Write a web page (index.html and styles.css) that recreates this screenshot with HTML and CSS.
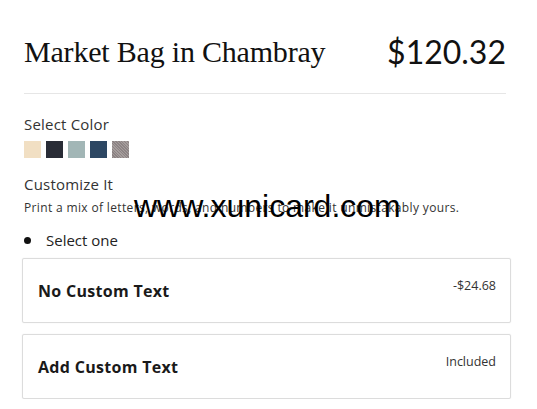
FILE: index.html
```html
<!DOCTYPE html>
<html lang="en">
<head>
  <meta charset="UTF-8" />
  <title>Market Bag in Chambray</title>
  <link rel="stylesheet" href="styles.css">
</head>
<body>
  <div class="product">
    <div class="product-head">
      <h1>Market Bag in Chambray</h1>
      <div class="price">$120.32</div>
    </div>

    <div class="field">
      <div class="label">Select Color</div>
      <div class="swatches">
        <span class="swatch natural"></span>
        <span class="swatch black"></span>
        <span class="swatch sage"></span>
        <span class="swatch navy"></span>
        <span class="swatch tweed"></span>
      </div>
    </div>

    <div class="field custom">
      <div class="label">Customize It</div>
      <p class="hint">Print a mix of letters, words, and numbers to make it unmistakably yours.</p>
    </div>

    <div class="select-one"><span class="dot"></span>Select one</div>

    <div class="options">
      <div class="option">
        <span class="option-name">No Custom Text</span>
        <span class="option-price">-$24.68</span>
      </div>
      <div class="option">
        <span class="option-name">Add Custom Text</span>
        <span class="option-price">Included</span>
      </div>
    </div>
  </div>

  <div class="watermark">www.xunicard.com</div>
</body>
</html>
```

FILE: styles.css
```css
* {
  box-sizing: border-box;
  margin: 0;
  padding: 0;
}

body {
  background: #fff;
  color: #222;
  font-family: "Open Sans", "Noto Sans", sans-serif;
  position: relative;
}

.product {
  padding: 0 26px 0 22px;
}

.product-head {
  display: flex;
  justify-content: space-between;
  align-items: center;
  margin: 0 5px 0 2px;
  padding: 32px 0 21px;
  border-bottom: 1px solid #e6e6e6;
}

.product-head h1 {
  font-family: "Liberation Serif", serif;
  font-weight: normal;
  font-size: 30px;
  line-height: 40px;
  color: #111;
  letter-spacing: -0.2px;
}

.price {
  font-family: Lato, sans-serif;
  font-size: 32px;
  line-height: 40px;
  color: #111;
}

.field {
  margin: 0 2px;
}

.label {
  font-size: 15px;
  line-height: 20px;
  color: #333;
  letter-spacing: 0.2px;
}

.product-head + .field {
  padding-top: 20px;
}

.swatches {
  display: flex;
  gap: 5px;
  margin-top: 7px;
}

.swatch {
  width: 17px;
  height: 17px;
}

.natural { background: #f1dfc3; }
.black { background: #292c36; }
.sage { background: #a2b6b6; }
.navy { background: #2d4763; }
.tweed {
  background: repeating-linear-gradient(45deg, #8c8384 0 1px, #a59d9c 1px 2px);
}

.custom {
  margin-top: 16px;
}

.hint {
  font-size: 12px;
  line-height: 16px;
  color: #333;
  margin-top: 6px;
  letter-spacing: 0.35px;
}

.select-one {
  display: flex;
  align-items: center;
  font-size: 15px;
  line-height: 18px;
  color: #222;
  margin: 15px 0 0 2px;
}

.dot {
  width: 7px;
  height: 7px;
  border-radius: 50%;
  background: #111;
  margin: 0 15px 0 0;
}

.options {
  display: flex;
  flex-direction: column;
  gap: 11px;
  margin-top: 9px;
}

.option {
  display: flex;
  justify-content: space-between;
  align-items: flex-start;
  height: 65px;
  padding: 0 14px 0 15px;
  border: 1px solid #dcdcdc;
  border-radius: 2px;
  box-shadow: 0 0 1px rgba(0, 0, 0, 0.15);
}

.option-name {
  font-size: 16px;
  font-weight: bold;
  color: #1a1a1a;
  margin-top: 21px;
  letter-spacing: 0.3px;
}

.option-price {
  font-size: 12.5px;
  color: #333;
  margin-top: 18px;
}

.watermark {
  position: absolute;
  left: 134px;
  top: 188px;
  font-family: "Liberation Sans", Arial, sans-serif;
  font-size: 32px;
  color: #000;
}
```
